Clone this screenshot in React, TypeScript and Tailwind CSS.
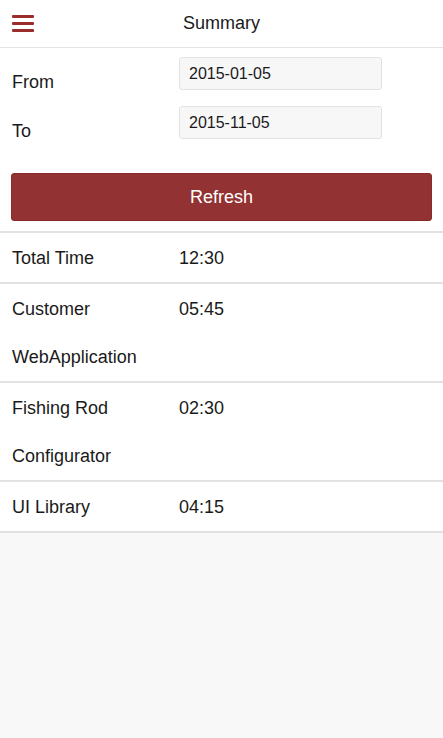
import { useState } from 'react';

const rows = [
  { label: 'Total Time', value: '12:30' },
  { label: 'Customer WebApplication', value: '05:45' },
  { label: 'Fishing Rod Configurator', value: '02:30' },
  { label: 'UI Library', value: '04:15' },
];

export default function App() {
  const [from, setFrom] = useState('2015-01-05');
  const [to, setTo] = useState('2015-11-05');

  return (
    <div className="flex min-h-[738px] flex-col bg-white text-[18px] text-[#1a1a1a] [font-family:'Liberation_Sans',Arial,sans-serif]">
      {/* header */}
      <div className="relative flex h-[48px] items-center justify-center border-b border-[#e3e3e3]">
        <button className="absolute top-[15px] left-[12px] flex w-[22px] flex-col gap-[4px]">
          <span className="h-[3px] w-full rounded-[1px] bg-[#9b2c2c]" />
          <span className="h-[3px] w-full rounded-[1px] bg-[#9b2c2c]" />
          <span className="h-[3px] w-full rounded-[1px] bg-[#9b2c2c]" />
        </button>
        <span className="-mt-[1px] text-[18px] leading-[21px]">Summary</span>
      </div>

      {/* date range */}
      <div className="flex flex-col gap-[16px] pt-[9px]">
        <div className="flex items-end">
          <span className="-mb-[3px] w-[179px] pl-[12px] leading-[21px]">From</span>
          <input
            value={from}
            onChange={(e) => setFrom(e.target.value)}
            className="h-[33px] w-[203px] rounded-[3px] border border-[#e2e2e2] bg-[#f7f7f7] px-[9px] text-[16px] text-[#1a1a1a] outline-none"
          />
        </div>
        <div className="flex items-end">
          <span className="-mb-[3px] w-[179px] pl-[12px] leading-[21px]">To</span>
          <input
            value={to}
            onChange={(e) => setTo(e.target.value)}
            className="h-[33px] w-[203px] rounded-[3px] border border-[#e2e2e2] bg-[#f7f7f7] px-[9px] text-[16px] text-[#1a1a1a] outline-none"
          />
        </div>
      </div>

      <div className="px-[11px] pt-[34px] pb-[10px]">
        <button className="h-[48px] w-full rounded-[3px] border border-[#862a2a] bg-[#933232] text-[18px] text-white">
          Refresh
        </button>
      </div>

      {/* summary table */}
      <div className="border-t-2 border-[#e2e2e2]">
        {rows.map((r) => (
          <div key={r.label} className="flex border-b-2 border-[#e2e2e2] pt-[1px] leading-[48px]">
            <span className="w-[179px] shrink-0 pr-[20px] pl-[12px]">{r.label}</span>
            <span>{r.value}</span>
          </div>
        ))}
      </div>

      <div className="flex-1 bg-[#f8f8f8]" />
    </div>
  );
}
